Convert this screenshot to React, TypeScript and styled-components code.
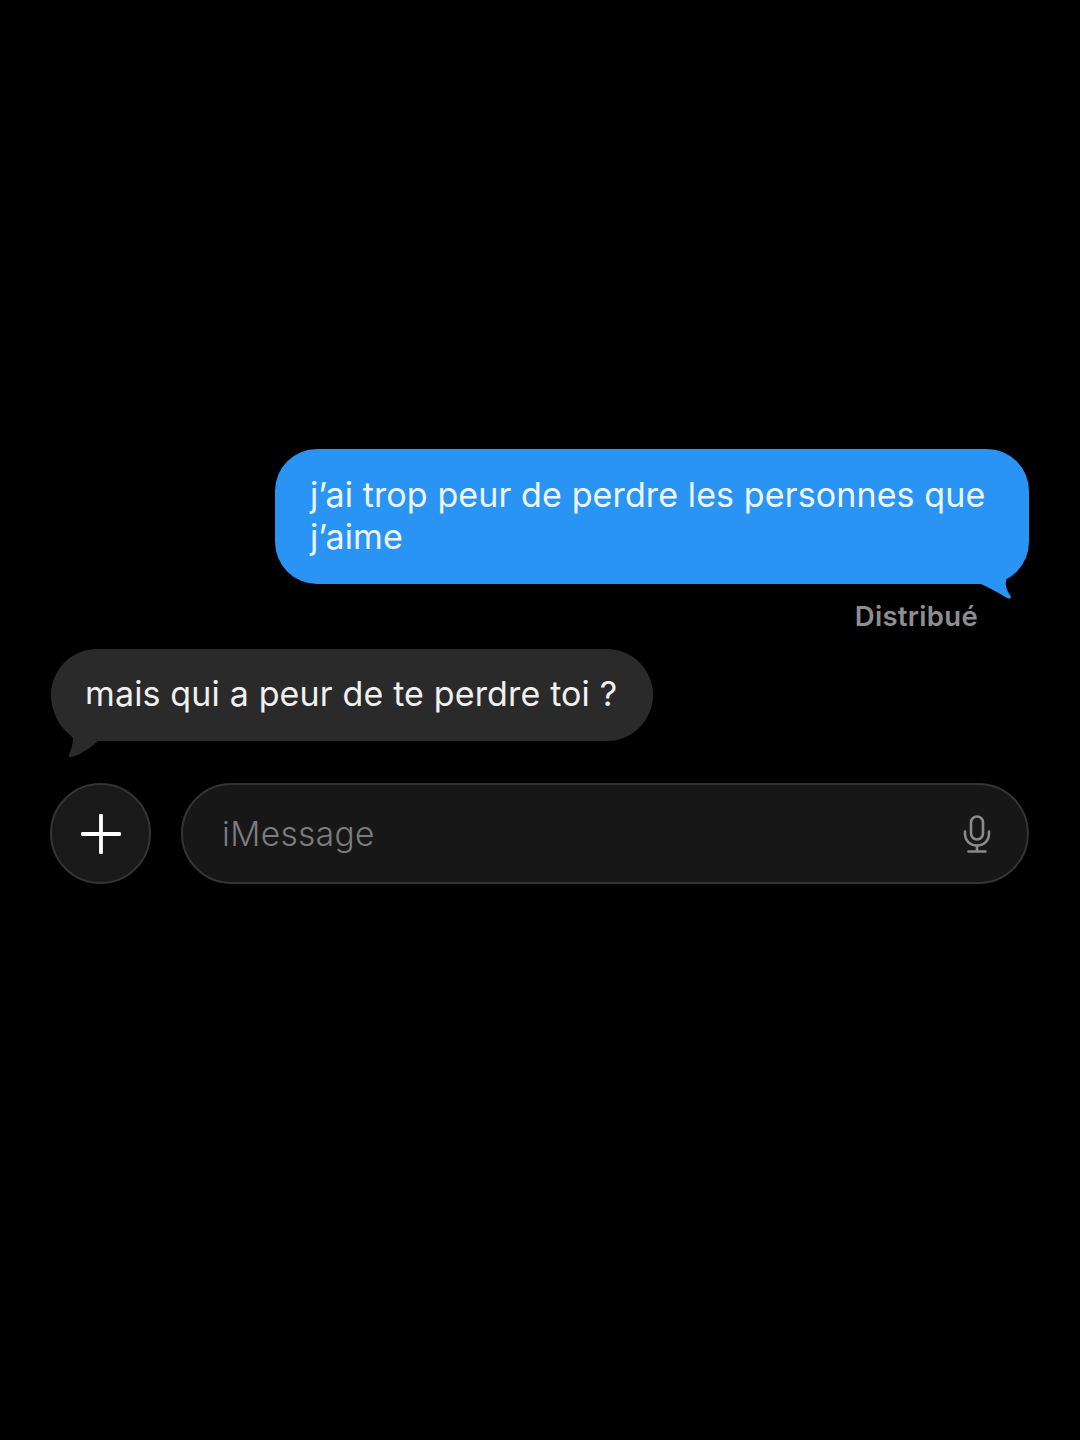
import React from 'react';
import styled, { createGlobalStyle } from 'styled-components';

const GlobalStyle = createGlobalStyle`
  html, body {
    margin: 0;
    padding: 0;
    background: #000;
  }
`;

function App() {
  return (
    <>
      <GlobalStyle />
      <Page>
        <SentRow>
          <SentBubble>
            j’ai trop peur de perdre les personnes que j’aime
            <SentTail width="56" height="60" viewBox="0 0 56 60">
              <path d="M0 20 L5 43 C14 46 24 52 34 58 C37 59.500 38.500 58 37.500 56 C34 51 32 46 33 41 C33.500 36 36 33 39 31 C44 27 50 22 54 6 L54 0 L0 0 Z" />
            </SentTail>
          </SentBubble>
        </SentRow>
        <Status>Distribué</Status>
        <ReceivedBubble>
          mais qui a peur de te perdre toi ?
          <ReceivedTail width="50" height="54" viewBox="0 0 50 54">
            <path d="M1 0 C3 10 7 18 11 23 C15 28 19 31 22 34 C22 40 20 46 18 50 C17 53 19 53.500 21 53 C30 50 38 45 46 38 L46 0 Z" />
          </ReceivedTail>
        </ReceivedBubble>
        <InputRow>
          <PlusButton>
            <svg width="40" height="40" viewBox="0 0 40 40">
              <path d="M20 1.500 V38.500 M1.500 20 H38.500" stroke="#fff" strokeWidth="3.800" strokeLinecap="round" />
            </svg>
          </PlusButton>
          <InputField>
            <Placeholder>iMessage</Placeholder>
            <svg width="28" height="38" viewBox="0 0 28 38" fill="none" stroke="#8a8a8a" strokeWidth="2.600" strokeLinecap="round">
              <rect x="8" y="1.500" width="12" height="23" rx="6" />
              <path d="M2 16.500 V18.500 C2 25.500 7 30.500 14 30.500 C21 30.500 26 25.500 26 18.500 V16.500" />
              <path d="M14 30.500 V36 M5.500 36.500 H22.500" />
            </svg>
          </InputField>
        </InputRow>
      </Page>
    </>
  );
}
export default App;

const Page = styled.div`
  width: 1080px;
  height: 1440px;
  box-sizing: border-box;
  padding: 449px 51px 0 50px;
  background: #000;
  display: flex;
  flex-direction: column;
  font-family: Inter, 'Liberation Sans', sans-serif;
  overflow: hidden;
`;

const SentRow = styled.div`
  display: flex;
  justify-content: flex-end;
`;

const SentBubble = styled.div`
  position: relative;
  width: 754px;
  height: 135px;
  box-sizing: border-box;
  padding: 25px 36px 0 35px;
  border-radius: 42px;
  background: #2a94f4;
  color: #eef6fd;
  font-size: 34px;
  letter-spacing: 0.12px;
  line-height: 42px;
`;

const SentTail = styled.svg`
  position: absolute;
  right: 0;
  bottom: -16px;
  fill: #2a94f4;
`;

const Status = styled.div`
  margin: 17px 51px 0 0;
  height: 30px;
  text-align: right;
  color: #8e8e8e;
  font-size: 27.500px;
  font-weight: 600;
  letter-spacing: 0.3px;
  line-height: 30px;
`;

const ReceivedBubble = styled.div`
  position: relative;
  align-self: flex-start;
  margin: 18px 0 0 1px;
  width: 602px;
  height: 92px;
  box-sizing: border-box;
  padding: 0 0 2px 34px;
  border-radius: 46px;
  background: #2a2a2a;
  color: #f0f0f0;
  font-size: 34px;
  letter-spacing: 0.15px;
  line-height: 90px;
  white-space: nowrap;
`;

const ReceivedTail = styled.svg`
  position: absolute;
  left: 0;
  bottom: -17px;
  fill: #2a2a2a;
`;

const InputRow = styled.div`
  margin-top: 42px;
  display: flex;
  gap: 30px;
`;

const PlusButton = styled.div`
  width: 101px;
  height: 101px;
  flex: none;
  box-sizing: border-box;
  border: 2px solid #343434;
  border-radius: 50%;
  background: #191919;
  display: flex;
  align-items: center;
  justify-content: center;
`;

const InputField = styled.div`
  flex: 1;
  height: 101px;
  box-sizing: border-box;
  padding: 0 36px 0 39px;
  border: 2px solid #343434;
  border-radius: 51px;
  background: #171717;
  display: flex;
  align-items: center;
  justify-content: space-between;
`;

const Placeholder = styled.span`
  color: #7c7c7c;
  font-size: 33.500px;
  letter-spacing: 0.35px;
  font-weight: 300;
`;
